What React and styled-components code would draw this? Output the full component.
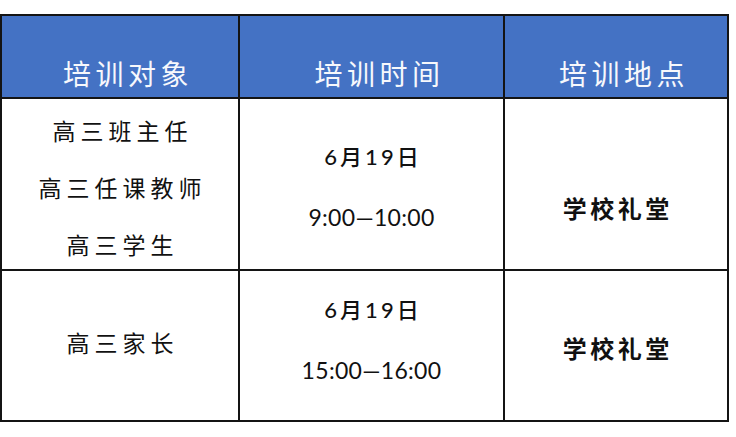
import React from 'react'
import styled, { createGlobalStyle } from 'styled-components'

const GlobalStyle = createGlobalStyle`
  html, body {
    margin: 0;
    padding: 0;
    background: #fff;
  }
  body {
    font-family: "Noto Sans CJK SC", sans-serif;
  }
`

const Page = styled.div`
  width: 736px;
  height: 437px;
  padding-top: 14px;
  box-sizing: border-box;
`

const Table = styled.div`
  display: grid;
  grid-template-columns: 236px 263px 222px;
  grid-template-rows: 81px 170px 149px;
  gap: 2px;
  padding: 2px;
  width: fit-content;
  background: #141414;
`

const HeadCell = styled.div`
  background: #4472c4;
  color: #f7f8fc;
  display: flex;
  align-items: center;
  justify-content: center;
  padding: 32px 0 0 16px;
  box-sizing: border-box;
  font-size: 28px;
  letter-spacing: 4.5px;
`

const Cell = styled.div`
  background: #fff;
  color: #111;
  display: flex;
  flex-direction: column;
  align-items: center;
  justify-content: center;
  padding-top: ${(p) => (p.$shift > 0 ? p.$shift * 2 : 0)}px;
  padding-bottom: ${(p) => (p.$shift < 0 ? -p.$shift * 2 : 0)}px;
  box-sizing: border-box;
`

const Who = styled.div`
  font-size: 23px;
  line-height: 57px;
  letter-spacing: 5px;
  text-indent: 5px;
`

const DateLine = styled.div`
  font-family: Lato, "Noto Sans CJK SC", sans-serif;
  font-size: 22px;
  font-weight: 500;
  line-height: 60px;
  letter-spacing: 3px;
  text-indent: 3px;
  white-space: nowrap;
`

const TimeLine = styled.div`
  font-family: Lato, "Noto Sans CJK SC", sans-serif;
  font-size: 23px;
  line-height: 60px;
  letter-spacing: 0.3px;
  white-space: nowrap;
`

const Place = styled.div`
  font-size: 24px;
  font-weight: 600;
  letter-spacing: 3.5px;
  text-indent: 3.5px;
`

const rows = [
  {
    who: ['高三班主任', '高三任课教师', '高三学生'],
    whoShift: 3,
    date: '6月19日',
    time: '9:00—10:00',
    timeShift: 3,
    placeShift: 23,
  },
  {
    who: ['高三家长'],
    whoShift: -3,
    date: '6月19日',
    time: '15:00—16:00',
    timeShift: -6,
    placeShift: 2,
  },
]

export default function App() {
  return (
    <>
      <GlobalStyle />
      <Page>
        <Table>
          <HeadCell>培训对象</HeadCell>
          <HeadCell>培训时间</HeadCell>
          <HeadCell>培训地点</HeadCell>
          {rows.map((r, i) => (
            <React.Fragment key={i}>
              <Cell $shift={r.whoShift}>
                {r.who.map((w) => (
                  <Who key={w}>{w}</Who>
                ))}
              </Cell>
              <Cell $shift={r.timeShift}>
                <DateLine>{r.date}</DateLine>
                <TimeLine>{r.time}</TimeLine>
              </Cell>
              <Cell $shift={r.placeShift}>
                <Place>学校礼堂</Place>
              </Cell>
            </React.Fragment>
          ))}
        </Table>
      </Page>
    </>
  )
}
